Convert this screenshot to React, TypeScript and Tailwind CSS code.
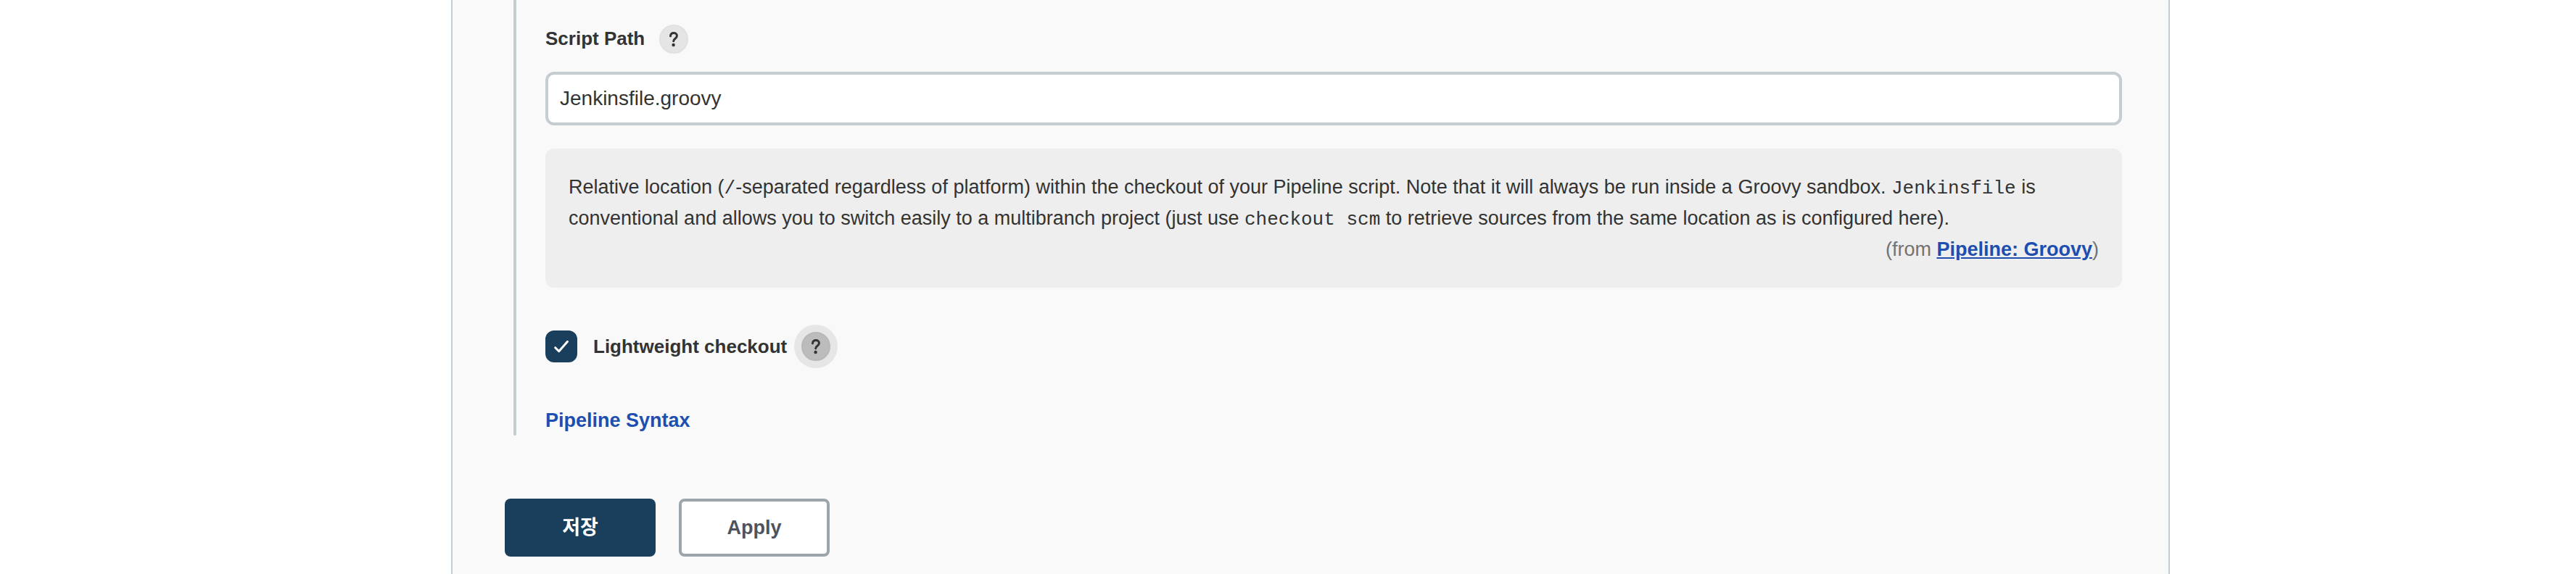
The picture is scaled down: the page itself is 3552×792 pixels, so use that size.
import { useState } from 'react'
import type { ReactNode } from 'react'
import { clsx } from 'clsx'

function HelpButton({ label, focused }: { label: string; focused?: boolean }) {
	return (
		<button
			type="button"
			aria-label={`Help for feature: ${label}`}
			className={clsx(
				'flex size-10 shrink-0 items-center justify-center rounded-full border-2 text-[#333333]',
				focused
					? 'border-[#b8b8b8] bg-[#bcbcbc] ring-10 ring-[#e6e6e6]'
					: 'border-[#e1e1e1] bg-[#e5e5e5]'
			)}
		>
			<svg viewBox="0 0 40 40" className="size-10 shrink-0" fill="none" aria-hidden="true">
				<path
					d="M15.5 15.8C15.7 13.2 17.4 11.6 20 11.6c2.6 0 4.4 1.6 4.4 3.9 0 3.9-4.7 3.5-4.7 7.3"
					stroke="currentColor"
					strokeWidth="3"
					strokeLinecap="round"
				/>
				<circle cx="19.6" cy="28" r="2.2" fill="currentColor" />
			</svg>
		</button>
	)
}

function Code({ children }: { children: ReactNode }) {
	return <code className="font-['Liberation_Mono',monospace] text-[26px] leading-none">{children}</code>
}

export default function App() {
	const [scriptPath, setScriptPath] = useState('Jenkinsfile.groovy')
	const [lightweight, setLightweight] = useState(true)

	return (
		<div className="min-h-screen bg-white pl-[622px] pr-[560px] font-['Liberation_Sans','Noto_Sans_CJK_KR',sans-serif] text-[27px] leading-[43px] text-[#333333]">
			<main className="min-h-screen border-x-2 border-[#c4cdd1] bg-[#f9f9f9] pr-16 pb-6 pl-[72px]">
				<form onSubmit={(e) => e.preventDefault()}>
					<div className="ml-3 flex">
						<div className="w-1 shrink-0 rounded-b-sm bg-[#c4cccf]" />
						<div className="min-w-0 flex-1 pl-10">
							<div className="flex items-center gap-5 pt-8">
								<label htmlFor="script-path" className="text-[26px] font-bold">
									Script Path
								</label>
								<HelpButton label="Script Path" />
							</div>
							<input
								id="script-path"
								type="text"
								value={scriptPath}
								onChange={(e) => setScriptPath(e.target.value)}
								className="mt-6 block h-[74px] w-full rounded-xl border-4 border-[#c4cdcf] bg-white px-4 text-[28px] outline-none"
							/>

							<div className="mt-8 rounded-xl bg-[#eeeeee] px-8 pt-8 pb-[31px]">
								<p>
									Relative location (<Code>/</Code>-separated regardless of platform) within the checkout of your
									Pipeline script. Note that it will always be run inside a Groovy sandbox. <Code>Jenkinsfile</Code> is
									<br />
									conventional and allows you to switch easily to a multibranch project (just use{' '}
									<Code>checkout scm</Code> to retrieve sources from the same location as is configured here).
								</p>
								<p className="text-right text-[#737373]">
									(from{' '}
									<a href="#pipeline-groovy" className="font-bold text-[#1d4eb0] underline">
										Pipeline: Groovy
									</a>
									)
								</p>
							</div>

							<div className="mt-[59px] flex items-center">
								<label className="flex items-center gap-[22px] text-[26px] font-bold">
									<span className="relative flex size-11">
										<input
											type="checkbox"
											checked={lightweight}
											onChange={(e) => setLightweight(e.target.checked)}
											className="peer size-11 appearance-none rounded-xl border-4 border-[#c4cdcf] bg-white checked:border-[#193f5d] checked:bg-[#193f5d]"
										/>
										<svg
											viewBox="0 0 44 44"
											className="pointer-events-none absolute inset-0 hidden size-11 peer-checked:block"
											fill="none"
											aria-hidden="true"
										>
											<path
												d="M13.7 23.7l5 5L30.5 15.3"
												stroke="white"
												strokeWidth="3"
												strokeLinecap="round"
												strokeLinejoin="round"
											/>
										</svg>
									</span>
									Lightweight checkout
								</label>
								<div className="ml-5">
									<HelpButton label="Lightweight checkout" focused />
								</div>
							</div>

							<div className="mt-[60px] pb-px leading-10">
								<a href="#pipeline-syntax" className="font-bold text-[#1d4eb0]">
									Pipeline Syntax
								</a>
							</div>
						</div>
					</div>

					<div className="mt-[87px] flex gap-8 font-bold">
						<button type="submit" className="h-20 w-52 rounded-lg bg-[#193f5d] text-white">
							저장
						</button>
						<button type="button" className="h-20 w-52 rounded-lg border-4 border-[#9ba6ac] bg-white text-[#4d545d]">
							Apply
						</button>
					</div>
				</form>
			</main>
		</div>
	)
}
